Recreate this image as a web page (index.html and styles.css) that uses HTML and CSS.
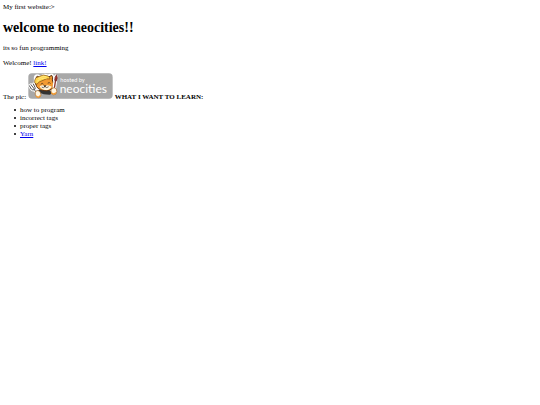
FILE: index.html
```html
<!DOCTYPE html>
<html lang="en">
<head>
<meta charset="utf-8">
<title>My first website</title>
<link rel="stylesheet" href="styles.css">
</head>
<body>
My first website:&gt;
<h1>welcome to neocities!!</h1>
<p>its so fun programming</p>
<p>Welcome! <a href="#link">link!</a></p>
<div class="picture-line">The pic:
<svg class="badge" viewBox="0 0 255 78" role="img" aria-label="hosted by neocities">
  <rect x="1" y="1" width="253" height="76" rx="11" fill="#a8a8a8"/>
  <g stroke-linejoin="round" stroke-linecap="round">
    <path d="M20 36 20 14Q21 4 31 7L38 11Q47 1 59 7L71 4Q77 5 75 16L77 31Q84 39 76 47Q61 61 44 55Q25 51 17 39Z" fill="#fff" stroke="#fff" stroke-width="5"/>
    <path d="M29 52 38 50 66 52 76 60 65 65 47 64 37 60Z" fill="#333"/>
    <path d="M24 28 25 12Q27 8 33 12L40 18 62 12 71 7Q75 11 73 21Q80 33 75 43Q66 56 48 53Q26 50 23 34Z" fill="#f39a31" stroke="#553014" stroke-width="3"/>
    <path d="M35 40Q44 34 50 39Q60 33 71 41Q63 53 51 51Q39 50 35 40Z" fill="#fff4dc"/>
    <path d="M20 29Q18 14 32 11Q46 2 60 9Q66 12 66 18Q55 15 45 22Q33 25 27 33Z" fill="#ffd34b" stroke="#7a4b15" stroke-width="2"/>
    <path d="M31 17Q41 9 54 10M28 24Q39 14 55 15" fill="none" stroke="#ffe77b" stroke-width="3"/>
    <path d="M39 33Q43 28 46 33M60 30Q65 26 67 31M49 38 54 38 51 41ZM51 41Q46 47 42 43M51 41Q56 47 61 42" fill="none" stroke="#292220" stroke-width="2"/>
    <path d="M4 38 10 48Q14 53 19 50M9 35 19 48M16 33 21 43Q23 48 19 50L30 65" fill="none" stroke="#fff" stroke-width="8"/>
    <path d="M4 38 10 48Q14 53 19 50M9 35 19 48M16 33 21 43Q23 48 19 50L30 65" fill="none" stroke="#555" stroke-width="3"/>
    <path d="M84 9 78 50" fill="none" stroke="#fff" stroke-width="11"/>
    <path d="M83 20 79 47" fill="none" stroke="#8b352b" stroke-width="4"/>
    <path d="M80 21Q79 13 86 5Q90 15 86 23Z" fill="#a83430" stroke="#64211f" stroke-width="2"/>
    <path d="M23 55Q30 49 36 56L39 66Q38 73 31 74Q23 72 22 65Z" fill="#fff6e2" stroke="#a66421" stroke-width="2"/>
    <path d="M72 46Q79 41 85 48Q89 57 83 64Q75 68 70 61Q67 52 72 46Z" fill="#fff6e2" stroke="#a66421" stroke-width="2"/>
    <path d="M25 70Q31 76 37 68M71 60Q77 66 83 60" fill="none" stroke="#f29b32" stroke-width="4"/>
  </g>
  <text class="badge-small" x="97" y="28">hosted by</text>
  <text class="badge-name" x="95" y="61">neocities</text>
</svg>
<b>WHAT I WANT TO LEARN:</b></div>
<ul>
  <li>how to program</li>
  <li>incorrect tags</li>
  <li>proper tags</li>
  <li><a href="#yarn">Yarn</a></li>
</ul>
</body>
</html>
```
FILE: styles.css
```css
body {
  margin: 3px;
  background: #fff;
  color: #000;
  font: 7px/8px "Liberation Serif", serif;
}

h1 {
  margin: 9px 0 8px;
  font-size: 14px;
  line-height: 16px;
}

p {
  margin: 0 0 7px;
}

a {
  color: #0000ee;
}

.picture-line {
  margin-top: -1px;
}

.badge {
  width: 85px;
  height: 26px;
}

.badge text {
  fill: #fff;
  font-family: Lato, sans-serif;
}

.badge .badge-small {
  font-size: 17px;
}

.badge .badge-name {
  font-size: 36px;
}

ul {
  margin: 5px 0;
  padding-left: 11px;
  list-style: none;
}

li {
  display: flex;
  align-items: center;
  gap: 4px;
}

li::before {
  content: "";
  width: 2px;
  height: 2px;
  border-radius: 50%;
  background: #000;
}
```
